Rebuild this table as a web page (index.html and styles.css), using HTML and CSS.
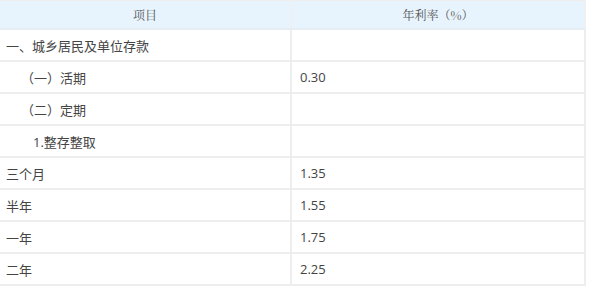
FILE: index.html
```html
<!DOCTYPE html>
<html lang="zh-CN">
<head>
<meta charset="utf-8">
<link rel="stylesheet" href="styles.css">
</head>
<body>
<table class="rates">
  <thead>
    <tr><th class="col-item">项目</th><th class="col-rate">年利率（%）</th></tr>
  </thead>
  <tbody>
    <tr><td class="lv0">一、城乡居民及单位存款</td><td></td></tr>
    <tr><td class="lv1">（一）活期</td><td>0.30</td></tr>
    <tr><td class="lv1">（二）定期</td><td></td></tr>
    <tr><td class="lv2">1.整存整取</td><td></td></tr>
    <tr><td class="lv0">三个月</td><td>1.35</td></tr>
    <tr><td class="lv0">半年</td><td>1.55</td></tr>
    <tr><td class="lv0">一年</td><td>1.75</td></tr>
    <tr><td class="lv0">二年</td><td>2.25</td></tr>
  </tbody>
</table>
</body>
</html>
```
FILE: styles.css
```css
html, body {
  margin: 0;
  padding: 0;
  background: #ffffff;
}
.rates {
  border-collapse: collapse;
  width: 586px;
  table-layout: fixed;
  font-family: "Open Sans", "Noto Sans CJK SC", sans-serif;
  font-size: 13px;
  color: #444444;
}
.rates th {
  height: 27px;
  padding: 0;
  background: #e8f4fd;
  border-top: 1px solid #eeeeee;
  border-bottom: 2px solid #e6eef4;
  font-family: "Noto Serif CJK SC", "Noto Sans CJK SC", serif;
  font-weight: normal;
  font-size: 12px;
  color: #555555;
  text-align: center;
}
.rates .col-item {
  width: 290px;
  border-right: 2px solid #eef0f2;
}
.rates .col-rate {
  border-right: 2px solid #eef0f2;
}
.rates td {
  height: 30px;
  padding: 0 0 0 8px;
  border-bottom: 2px solid #eeeeee;
  border-right: 2px solid #eeeeee;
  vertical-align: middle;
  white-space: nowrap;
}
.rates td.lv0 { padding-left: 6px; }
.rates td.lv1 { padding-left: 21px; }
.rates td.lv2 { padding-left: 33px; }
```
